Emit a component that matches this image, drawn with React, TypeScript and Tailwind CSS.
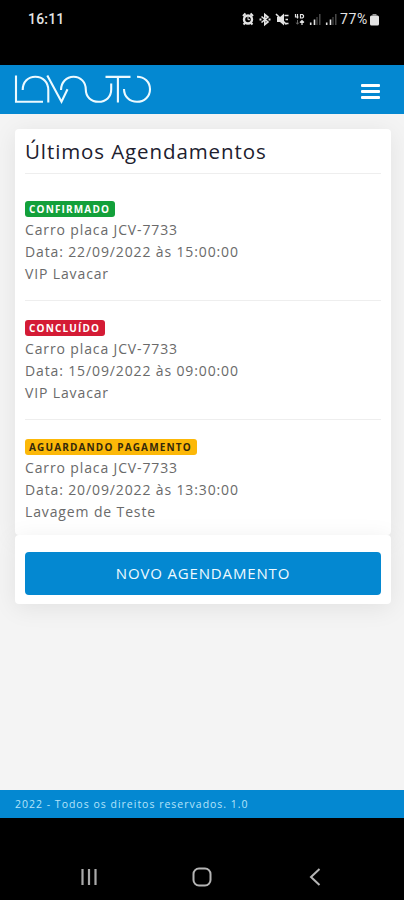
const appointments = [
  { status: 'CONFIRMADO', badge: 'w-[90px] bg-[#13a03a] text-white', plate: 'JCV-7733', date: '22/09/2022 às 15:00:00', place: 'VIP Lavacar' },
  { status: 'CONCLUÍDO', badge: 'w-[80px] bg-[#d41b35] text-white', plate: 'JCV-7733', date: '15/09/2022 às 09:00:00', place: 'VIP Lavacar' },
  { status: 'AGUARDANDO PAGAMENTO', badge: 'w-[172px] bg-[#fcb808] text-[#35290a]', plate: 'JCV-7733', date: '20/09/2022 às 13:30:00', place: 'Lavagem de Teste' },
]

function StatusIcons() {
  return (
    <svg width="98" height="16" viewBox="0 0 98 16" fill="none" stroke="#e4e4e4">
      {/* alarm */}
      <circle cx="6" cy="8.5" r="4" strokeWidth="2.4" />
      <path d="M1 5 3.500 2.500M11 5 8.500 2.500M1.500 13.500l2-2M10.500 13.500l-2-2" strokeWidth="2" />
      <path d="M6 6v2.700h2" strokeWidth="1" />
      {/* bluetooth */}
      <path d="m19.500 5.500 6.500 5.500-3.200 2.500v-10l3.200 2.500-6.500 5.500" strokeWidth="1.6" />
      <path d="M17.500 8.500h2M26.500 8.500h2" strokeWidth="2" />
      {/* muted speaker with vibration */}
      <path d="M35 6h3l4-3.500v12l-4-3.500h-3z" fill="#e4e4e4" stroke="none" />
      <path d="m34 3 10.500 10.500M42.500 4.500h4M43.500 8.500H46M42.500 12.500h4" strokeWidth="1.6" />
      {/* mobile data */}
      <path d="M53.500 3v3h3M55.500 3v4.500M58.500 3.500v3.500h2l1-1V4.500l-1-1z" strokeWidth="1.2" />
      <path d="M55.500 9v4M53.800 11.500l1.700 1.700 1.500-1.700" stroke="#666" strokeWidth="1" />
      <path d="M60 14V9.500M58 11.500l2-2 2 2" strokeWidth="1.2" />
      {/* signal bars */}
      <path d="M68.700 11.500v2.500M72.500 8.500v5.500M84.700 11.500v2.500M88.500 8.500v5.500" strokeWidth="1.6" />
      <path d="M77.800 3v11M93.800 3v11" stroke="#555" strokeWidth="1.3" />
      <path d="M75 6v8M91 6v8" stroke="#444" strokeWidth="1.3" />
    </svg>
  )
}

function Logo() {
  return (
    <svg width="140" height="32" viewBox="14 73 140 32" fill="none" stroke="#edfaff" strokeWidth="2.1">
      <path d="M16 74.500v26.200h27" />
      <path d="M22.700 89c0-8 5.500-13.300 12.600-13.300 7.700 0 13 5.500 13 13.300v12.500" />
      <path d="m47.300 74.500 14.200 26.200 6-12.500" />
      <path d="M61 89c0-7.500 5.500-13.300 12.500-13.300 7.200 0 12.300 5.500 12.300 12.800 0 7.500 5.400 12.300 12.700 12.300 7.500 0 12.700-5 12.700-12.300v-6" />
      <path d="M105.500 75.900H130.500M117.900 75.900v25.500" />
      <path d="M124 88c0 7.700 5.700 12.800 13 12.800 7.500 0 13-5.400 13-12.500 0-7.300-5.500-12.600-13-12.600" />
    </svg>
  )
}

export default function App() {
  return (
    <div className="flex h-[900px] w-[404px] flex-col overflow-hidden bg-[#f4f4f4] font-['Open_Sans',sans-serif]">
      <div className="flex h-[65px] shrink-0 items-start justify-between bg-black pt-[9px] pr-[25px] pl-[28px] font-[Roboto,sans-serif] text-[14px] leading-[20px] text-[#e4e4e4]">
        <span className="font-medium tracking-[0.2px]">16:11</span>
        <div className="flex items-center">
          <StatusIcons />
          <span className="w-[30px] tracking-[0.6px] whitespace-nowrap">77%</span>
          <svg width="9" height="13" viewBox="0 0 9 13" fill="#e4e4e4">
            <path d="M2.500 1h4v1.500h-4z" fill="#999" />
            <rect y="2.5" width="9" height="10" rx="1.5" />
          </svg>
        </div>
      </div>

      <header className="flex h-[49px] shrink-0 items-center justify-between bg-[#0488d1] pr-6 pl-[14px]">
        <Logo />
        <button className="mt-[3px] flex w-[19px] flex-col gap-[3px]">
          <span className="h-[3px] w-full rounded-[1px] bg-white" />
          <span className="h-[3px] w-full rounded-[1px] bg-white" />
          <span className="h-[3px] w-full rounded-[1px] bg-white" />
        </button>
      </header>

      <main className="flex-1 pt-[15px] pr-[13px] pl-[15px]">
        <section className="h-[406px] rounded-[4px] bg-white px-[10px] shadow-[0_4px_24px_rgba(0,0,0,0.08)]">
          <h1 className="h-[45px] border-b border-[#eeeeee] pt-[7px] text-[20.5px] leading-[30px] tracking-[0.9px] whitespace-nowrap text-[#20202e]">Últimos Agendamentos</h1>
          <div className="pt-[23px]">
            {appointments.map((a, i) => (
              <div key={a.status} className={i > 0 ? 'mt-[15px] border-t border-[#eeeeee] pt-[15px]' : ''}>
                <div className="flex h-[22px] items-center pt-[2px]">
                  <span className={`h-[16px] rounded-[3px] pl-[4px] text-[10px] leading-[16px] font-bold tracking-[1.15px] whitespace-nowrap ${a.badge}`}>{a.status}</span>
                </div>
                <div className="text-[14px] leading-[22px] tracking-[0.87px] text-[#6a6a6a]">
                  <p>Carro placa {a.plate}</p>
                  <p>Data: {a.date}</p>
                  <p>{a.place}</p>
                </div>
              </div>
            ))}
          </div>
        </section>
        <section className="h-[69px] rounded-[4px] bg-white px-[10px] pt-[17px] shadow-[0_4px_24px_rgba(0,0,0,0.08)]">
          <button className="h-[43px] w-full rounded-[4px] bg-[#0488d1] text-[15px] tracking-[0.85px] text-[#edfaff]">NOVO AGENDAMENTO</button>
        </section>
      </main>

      <footer className="h-[28px] shrink-0 bg-[#0488d1] pl-[15px] text-[10.5px] leading-[28px] tracking-[1px] text-[#b5e4fa]">
        2022 - Todos os direitos reservados. 1.0
      </footer>

      <nav className="flex h-[82px] shrink-0 items-center justify-between bg-black px-[80px] pt-[35px]">
        <svg width="18" height="18" viewBox="0 0 18 18" stroke="#aaa" strokeWidth="2.2">
          <path d="M2.500 1v16M9 1v16M15.500 1v16" />
        </svg>
        <svg width="20" height="20" viewBox="0 0 20 20" fill="none" stroke="#b5b5b5" strokeWidth="2">
          <rect x="1.5" y="1.5" width="17" height="17" rx="5.5" />
        </svg>
        <svg width="18" height="18" viewBox="0 0 18 18" fill="none" stroke="#b5b5b5" strokeWidth="2">
          <path d="M13.500 1 5 9l8.500 8" />
        </svg>
      </nav>
    </div>
  )
}
